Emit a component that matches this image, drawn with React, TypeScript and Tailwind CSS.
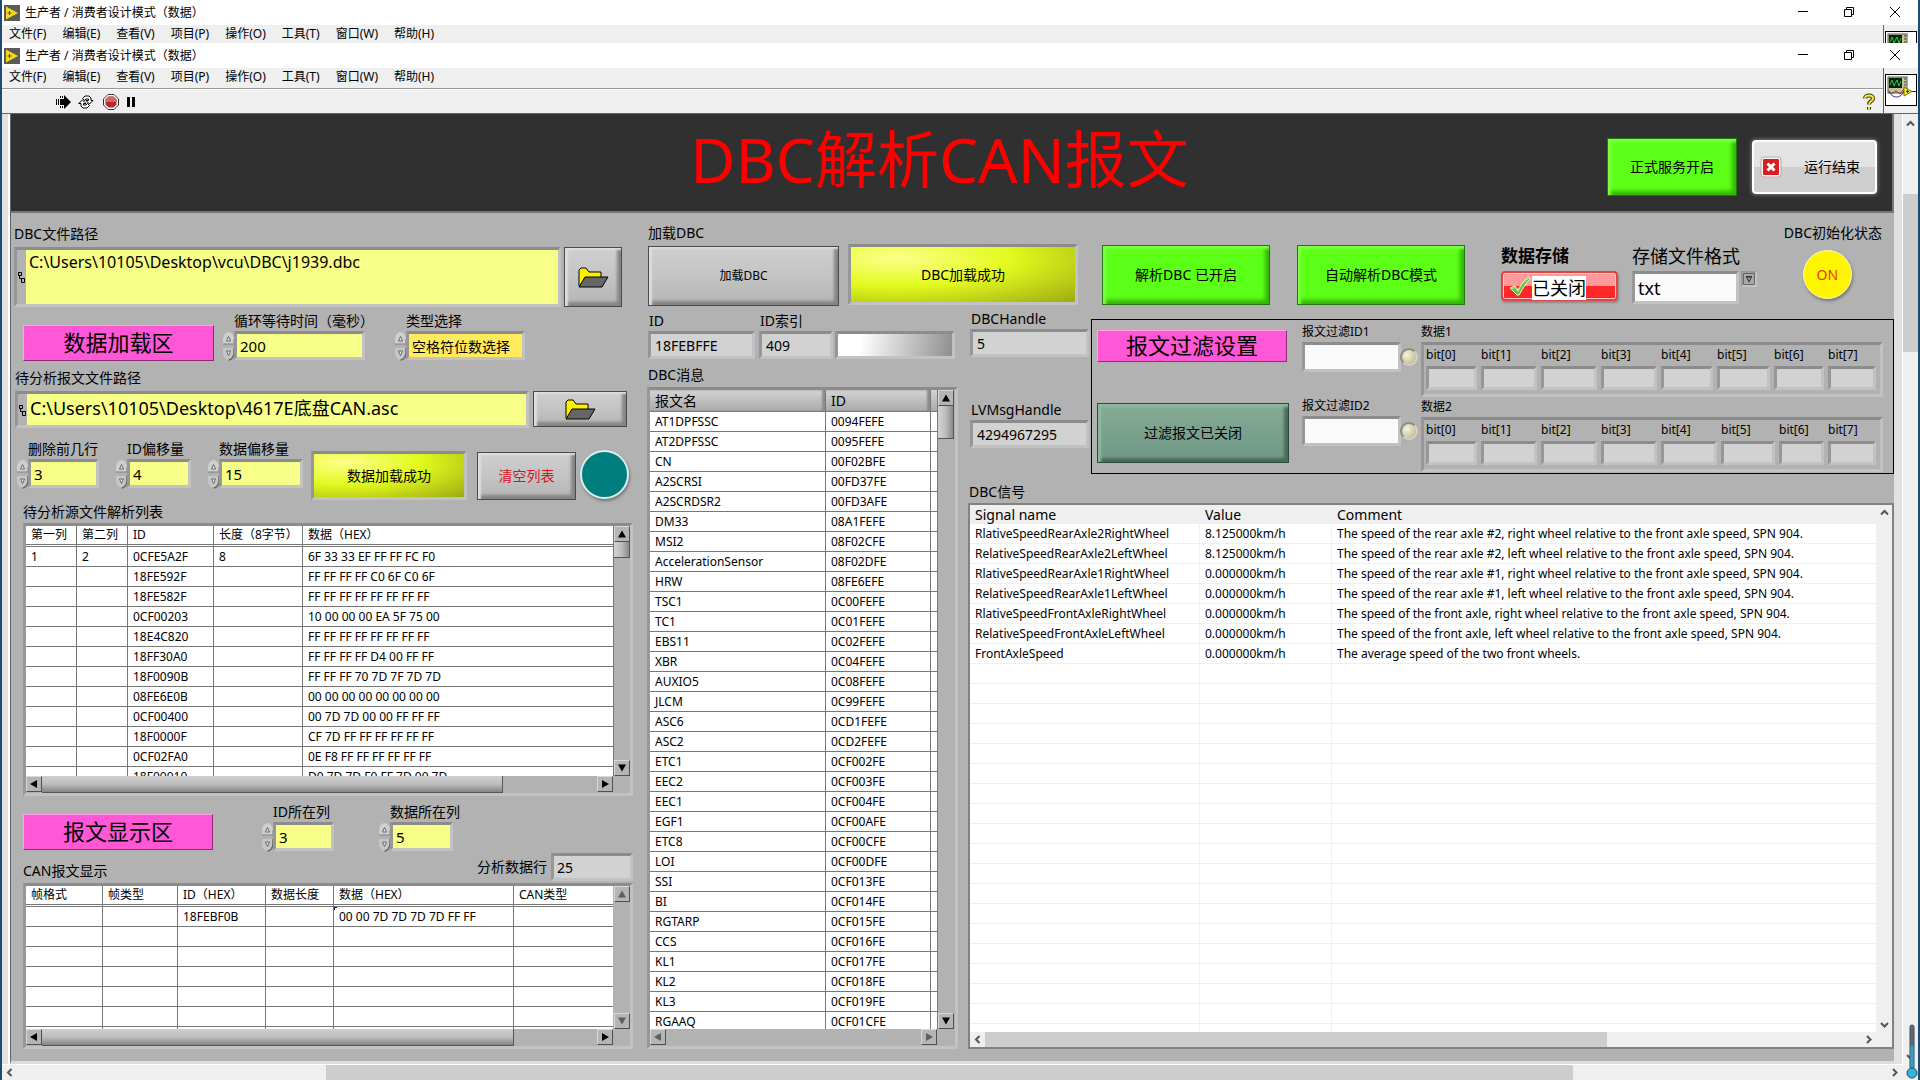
import type { ReactNode } from "react";

const menus = ["文件(F)", "编辑(E)", "查看(V)", "项目(P)", "操作(O)", "工具(T)", "窗口(W)", "帮助(H)"];

const sourceRows = [
  ["1", "2", "0CFE5A2F", "8", "6F 33 33 EF FF FF FC F0"],
  ["", "", "18FE592F", "", "FF FF FF FF C0 6F C0 6F"],
  ["", "", "18FE582F", "", "FF FF FF FF FF FF FF FF"],
  ["", "", "0CF00203", "", "10 00 00 00 EA 5F 75 00"],
  ["", "", "18E4C820", "", "FF FF FF FF FF FF FF FF"],
  ["", "", "18FF30A0", "", "FF FF FF FF D4 00 FF FF"],
  ["", "", "18F0090B", "", "FF FF FF 70 7D 7F 7D 7D"],
  ["", "", "08FE6E0B", "", "00 00 00 00 00 00 00 00"],
  ["", "", "0CF00400", "", "00 7D 7D 00 00 FF FF FF"],
  ["", "", "18F0000F", "", "CF 7D FF FF FF FF FF FF"],
  ["", "", "0CF02FA0", "", "0E F8 FF FF FF FF FF FF"],
  ["", "", "18F00010", "", "D0 7D 7D F0 FF 7D 00 7D"],
];

const canRows = [
  ["", "", "18FEBF0B", "", "00 00 7D 7D 7D 7D FF FF", ""],
  ["", "", "", "", "", ""],
  ["", "", "", "", "", ""],
  ["", "", "", "", "", ""],
  ["", "", "", "", "", ""],
  ["", "", "", "", "", ""],
  ["", "", "", "", "", ""],
];

const messages = [
  ["AT1DPFSSC", "0094FEFE"],
  ["AT2DPFSSC", "0095FEFE"],
  ["CN", "00F02BFE"],
  ["A2SCRSI", "00FD37FE"],
  ["A2SCRDSR2", "00FD3AFE"],
  ["DM33", "08A1FEFE"],
  ["MSI2", "08F02CFE"],
  ["AccelerationSensor", "08F02DFE"],
  ["HRW", "08FE6EFE"],
  ["TSC1", "0C00FEFE"],
  ["TC1", "0C01FEFE"],
  ["EBS11", "0C02FEFE"],
  ["XBR", "0C04FEFE"],
  ["AUXIO5", "0C08FEFE"],
  ["JLCM", "0C99FEFE"],
  ["ASC6", "0CD1FEFE"],
  ["ASC2", "0CD2FEFE"],
  ["ETC1", "0CF002FE"],
  ["EEC2", "0CF003FE"],
  ["EEC1", "0CF004FE"],
  ["EGF1", "0CF00AFE"],
  ["ETC8", "0CF00CFE"],
  ["LOI", "0CF00DFE"],
  ["SSI", "0CF013FE"],
  ["BI", "0CF014FE"],
  ["RGTARP", "0CF015FE"],
  ["CCS", "0CF016FE"],
  ["KL1", "0CF017FE"],
  ["KL2", "0CF018FE"],
  ["KL3", "0CF019FE"],
  ["RGAAQ", "0CF01CFE"],
];

const signals = [
  ["RlativeSpeedRearAxle2RightWheel", "8.125000km/h", "The speed of the rear axle #2, right wheel relative to the front axle speed, SPN 904."],
  ["RelativeSpeedRearAxle2LeftWheel", "8.125000km/h", "The speed of the rear axle #2, left wheel relative to the front axle speed, SPN 904."],
  ["RlativeSpeedRearAxle1RightWheel", "0.000000km/h", "The speed of the rear axle #1, right wheel relative to the front axle speed, SPN 904."],
  ["RelativeSpeedRearAxle1LeftWheel", "0.000000km/h", "The speed of the rear axle #1, left wheel relative to the front axle speed, SPN 904."],
  ["RlativeSpeedFrontAxleRightWheel", "0.000000km/h", "The speed of the front axle, right wheel relative to the front axle speed, SPN 904."],
  ["RelativeSpeedFrontAxleLeftWheel", "0.000000km/h", "The speed of the front axle, left wheel relative to the front axle speed, SPN 904."],
  ["FrontAxleSpeed", "0.000000km/h", "The average speed of the two front wheels."],
];

const blankSignals = Array.from({ length: 19 }, (_, i) => i);

const sunken =
  "border-[3px] border-t-[#8c8c8c] border-l-[#979797] border-r-[#c2c2c2] border-b-[#c2c2c2]";
const grayButton =
  "border border-[#4a4a4a] bg-linear-to-b from-[#cfcfcf] via-[#c4c4c4] to-[#b4b4b4] shadow-[inset_3px_2px_2px_#dedede,inset_-4px_-4px_3px_#858585]";
const greenButton =
  "border border-[#1f7a0c] bg-[#5cff16] text-sm shadow-[inset_3px_3px_3px_#7dff45,inset_-4px_-4px_4px_#35b30b]";

function WindowBar() {
  return (
    <div className="flex h-[25px] items-center bg-white pl-[2px]">
      <svg width="16" height="16" viewBox="0 0 16 16">
        <rect width="16" height="16" fill="#5b5b5b" />
        <path d="M2 1.5 14 8 2 14.5z" fill="#f5d91c" />
        <path d="M3.5 8h4M5.5 6v4" stroke="#6b5200" />
      </svg>
      <span className="ml-[5px] flex-1 text-xs">生产者 / 消费者设计模式（数据）</span>
      <div className="flex items-center gap-[34px] pr-[17px] pb-[2px]">
        <button aria-label="最小化">
          <svg width="12" height="12" className="block" stroke="#000" fill="none">
            <path d="M1 5.5h10" />
          </svg>
        </button>
        <button aria-label="还原">
          <svg width="12" height="12" className="block" stroke="#000" fill="none">
            <path d="M1.500 3.500h7v7h-7zM3.500 3.500v-2h7v7h-2" />
          </svg>
        </button>
        <button aria-label="关闭">
          <svg width="12" height="12" className="block" stroke="#000" fill="none">
            <path d="M1 1l10 10M11 1 1 11" />
          </svg>
        </button>
      </div>
    </div>
  );
}

function MenuBar() {
  return (
    <nav className="flex h-[18px] items-center gap-4 bg-[#efefef] pl-[7px] text-xs leading-4">
      {menus.map((m) => (
        <button key={m}>{m}</button>
      ))}
    </nav>
  );
}

function ViIcon() {
  return (
    <svg width="32" height="32" viewBox="0 0 32 32" className="block shrink-0">
      <rect x=".5" y=".5" width="31" height="31" fill="#fff" stroke="#000" />
      <rect x="3" y="3" width="19" height="16" fill="#c9c39a" stroke="#555" />
      <rect x="4" y="4" width="13" height="10" fill="#03250c" />
      <path d="M5 11l2-5 2 6 3-6 2 6 2-5" stroke="#31c44a" fill="none" />
      <path d="M19 5h2M19 8h2M19 11h2" stroke="#333" />
      <path d="M4 17c3 8 12 8 15 0" stroke="#1c1c8c" fill="none" />
      <path d="M6 20l5-3 4 3 4-5" stroke="#d02020" fill="none" />
      <path d="M19 13l8 4.500-8 4.500z" fill="#f7e83c" stroke="#7d6f00" />
      <path d="M27 17.500h4M21 17.500h3M22.500 16v3" stroke="#333" />
    </svg>
  );
}

function Toolbar() {
  return (
    <div className="flex h-[23px] items-center bg-[#efefef] pl-[54px] pr-[7px]">
      <button aria-label="运行">
        <svg width="16" height="14" className="block">
          <path d="M8 4V0l7 7-7 7v-4H5V4z" />
          <path d="M.500 4v6M2.500 4v6M4.500 4v6M4.500 1v2M6.500 1v2M4.500 11v2M6.500 11v2" stroke="#000" />
        </svg>
      </button>
      <button aria-label="连续运行" className="ml-[6px]">
        <svg width="16" height="14" className="block" fill="#fff" stroke="#000">
          <path d="M4.500 3.500l2.500-2.500h4l2 2V5.500h2L11.500 9 8 5.500h2.500V4H8L6.500 5.500z" />
          <path d="M11.500 10.500L9 13H5l-2-2V8.500H.500L4.500 5 8 8.500H5.500V10H8l1.500-1.500z" />
        </svg>
      </button>
      <button aria-label="中止执行" className="ml-[9px]">
        <svg width="16" height="16" className="block">
          <path d="M5 .500h6L15.500 5v6L11 15.500H5L.500 11V5z" fill="#fff" stroke="#333" />
          <path d="M5.500 2.500h5l3 3v5l-3 3h-5l-3-3v-5z" fill="#b32a2e" />
          <path d="M5.500 2.500h5l3 3V8h-11V5.500z" fill="#cf6a6c" />
        </svg>
      </button>
      <button aria-label="暂停" className="ml-[7px]">
        <svg width="12" height="14" className="block">
          <path d="M1 2h3v10H1zM6 2h3v10H6z" />
        </svg>
      </button>
      <button aria-label="帮助" className="ml-auto">
        <svg width="14" height="18" viewBox="0 0 14 18" className="block" fill="none">
          <path d="M3 5.500C3 1.500 11 1.500 11 5.500 11 8 7 8 7 11.500M7 14v2.500" stroke="#3d3a00" strokeWidth="4" />
          <path d="M3 5.500C3 1.500 11 1.500 11 5.500 11 8 7 8 7 11.500M7 14v2.500" stroke="#f2e83a" strokeWidth="2" />
        </svg>
      </button>
    </div>
  );
}

function Chevron({ d }: { d: string }) {
  return (
    <svg width="15" height="15" viewBox="0 0 15 15" className="block shrink-0">
      <path d={d} stroke="#555" strokeWidth="2" fill="none" />
    </svg>
  );
}

const up = "M4 9.500 7.500 6 11 9.500";
const down = "M4 6 7.500 9.500 11 6";
const left = "M9.500 4 6 7.500 9.500 11";
const right = "M6 4 9.500 7.500 6 11";

function ArrowButton({ dir, dim }: { dir: "up" | "down" | "left" | "right"; dim?: boolean }) {
  const shapes = {
    up: "M7 3.500 11 10.500H3z",
    down: "M7 10.500 3 3.500h8z",
    left: "M3 7l7-4v8z",
    right: "M11 7 4 3v8z",
  };
  return (
    <button
      aria-label={dir}
      className="h-4 w-4 shrink-0 border border-t-[#d8d8d8] border-l-[#d8d8d8] border-r-[#4f4f4f] border-b-[#4f4f4f] bg-[#b5b5b5]"
    >
      <svg width="14" height="14" className="block">
        <path d={shapes[dir]} fill={dim ? "#5f5f5f" : "#000"} />
      </svg>
    </button>
  );
}

function Folder() {
  return (
    <svg width="31" height="21" viewBox="0 0 31 21" stroke="#000" strokeLinejoin="round">
      <path d="M1 19V3l2-2h5l3 4h12v5" fill="#fff200" />
      <path d="M1 20 7 10h23l-6 10z" fill="#666" />
    </svg>
  );
}

function Pink({ children, className }: { children: ReactNode; className: string }) {
  return (
    <h2
      className={`flex items-center justify-center border border-t-[#ffa3e6] border-l-[#ffa3e6] border-r-[#8c2c77] border-b-[#8c2c77] bg-[#ff57d5] pb-[2px] text-[22px] leading-7 ${className}`}
    >
      {children}
    </h2>
  );
}

function Spinner() {
  return (
    <svg width="13" height="30" viewBox="0 0 13 30" className="block shrink-0">
      <path d="M1 13V8C1 4 4 1 6.500 1S12 4 12 8v5z" fill="#cfcfcf" />
      <path d="M12 8v5H1" fill="none" stroke="#808080" />
      <path d="M1 17v5c0 4 3 7 5.500 7S12 26 12 22v-5z" fill="#c6c6c6" />
      <path d="M12 17v5c0 4-3 7-5.500 7" fill="none" stroke="#6a6a6a" strokeWidth="1.500" />
      <path d="M4.500 10 6.500 5.500 8.500 10zM4.500 20l2 4.500 2-4.500z" fill="#eee" stroke="#666" />
    </svg>
  );
}

function Spin(props: { id: string; label: string; value: string; width: string; bg?: string; size?: string }) {
  return (
    <div className="grid shrink-0 grid-cols-[12px_auto]">
      <label htmlFor={props.id} className="col-start-2 w-0 text-sm leading-5 whitespace-nowrap">
        {props.label}
      </label>
      <Spinner />
      <input
        id={props.id}
        defaultValue={props.value}
        className={`${sunken} h-[29px] px-[3px] ${props.width} ${props.bg ?? "bg-[#f7ff88]"} ${props.size ?? "text-[15px]"}`}
      />
    </div>
  );
}

function PathMark() {
  return (
    <svg width="9" height="14" className="block shrink-0 self-center" fill="none" stroke="#000">
      <path d="M1.500 2.500h3v3h-3zM2.500 5.500v3h2M4.500 8.500h3v4h-3z" />
    </svg>
  );
}

function Readout(props: { id: string; label: string; value: string; className: string }) {
  return (
    <div className={`flex flex-col ${props.className}`}>
      <label htmlFor={props.id} className="pl-px text-sm leading-5 whitespace-nowrap">
        {props.label}
      </label>
      <input
        id={props.id}
        readOnly
        defaultValue={props.value}
        className={`${sunken} h-7 w-full bg-[#d2d2d2] px-1 text-sm`}
      />
    </div>
  );
}

function HScroll({ thumb, dim }: { thumb?: string; dim?: boolean }) {
  return (
    <div className="flex h-[17px] shrink-0 bg-[#b2b2b2]">
      <ArrowButton dir="left" dim={dim} />
      <div className="flex-1">
        {thumb && (
          <div
            className={`h-full border-r border-b border-[#555] bg-linear-to-b from-[#cfcfcf] via-[#bdbdbd] to-[#858585] ${thumb}`}
          />
        )}
      </div>
      <ArrowButton dir="right" dim={dim} />
    </div>
  );
}

function VScroll({ thumb, dim }: { thumb?: string; dim?: boolean }) {
  return (
    <div className="flex w-4 shrink-0 flex-col bg-[#b2b2b2]">
      <ArrowButton dir="up" dim={dim} />
      <div className="min-h-0 flex-1">
        {thumb && (
          <div
            className={`w-full border-r border-b border-[#555] bg-linear-to-r from-[#d2d2d2] via-[#bdbdbd] to-[#8a8a8a] ${thumb}`}
          />
        )}
      </div>
      <ArrowButton dir="down" dim={dim} />
    </div>
  );
}

function GridTable(props: { heads: string[]; cols: string[]; rows: string[][]; active?: number }) {
  return (
    <table className="w-full table-fixed border-separate border-spacing-0 text-xs leading-4">
      <colgroup>
        {props.cols.map((c, i) => (
          <col key={i} className={c} />
        ))}
      </colgroup>
      <thead>
        <tr className="h-[21px] text-left">
          {props.heads.map((h) => (
            <th
              key={h}
              className="border-b-[3px] border-double border-[#777] border-r pl-[5px] font-normal whitespace-nowrap last:border-r-0"
            >
              {h}
            </th>
          ))}
        </tr>
      </thead>
      <tbody>
        {props.rows.map((row, i) => (
          <tr key={i} className="h-5">
            {row.map((cell, j) => (
              <td
                key={j}
                className="relative border-r border-b border-[#777] pl-[5px] whitespace-nowrap last:border-r-0"
              >
                {i === 0 && j === props.active && (
                  <span className="absolute top-0 left-0 h-[3px] w-[3px] border-t border-l border-[#14147a]" />
                )}
                {cell}
              </td>
            ))}
          </tr>
        ))}
      </tbody>
    </table>
  );
}

function FilterId({ id, label }: { id: string; label: string }) {
  return (
    <div>
      <label htmlFor={id} className="block text-xs leading-5 whitespace-nowrap">
        {label}
      </label>
      <div className="flex items-center">
        <input id={id} className={`${sunken} h-[30px] w-[99px] bg-[#fafafa] px-1 text-sm`} />
        <span className="-ml-px h-[18px] w-[18px] rounded-full border-2 border-t-[#8c8c7c] border-l-[#8c8c7c] border-r-[#d0d0c4] border-b-[#d0d0c4] bg-radial-[at_35%_35%] from-[#f6f3d8] to-[#b5ae86]" />
      </div>
    </div>
  );
}

function BitCluster({ name, title, cols }: { name: string; title: string; cols: string }) {
  return (
    <fieldset className="min-w-0 flex-1">
      <legend className="text-xs leading-5">{title}</legend>
      <div className={`${sunken} grid h-[55px] pl-[2px] ${cols}`}>
        {[0, 1, 2, 3, 4, 5, 6, 7].map((n) => (
          <div key={n} className="pr-1">
            <label htmlFor={`${name}-${n}`} className="block text-xs leading-5">
              bit[{n}]
            </label>
            <input
              id={`${name}-${n}`}
              readOnly
              className={`${sunken} mt-px block h-6 w-full bg-[#d2d2d2]`}
            />
          </div>
        ))}
      </div>
    </fieldset>
  );
}

function LeftColumn() {
  return (
    <div className="flex w-[622px] shrink-0 flex-col pt-[11px]">
      <label htmlFor="dbc-path" className="pl-[3px] text-sm leading-5">
        DBC文件路径
      </label>
      <div className="mt-[3px] ml-[3px] flex h-[60px] gap-[3px]">
        <div className={`${sunken} flex w-[547px] bg-[#b2b2b2]`}>
          <PathMark />
          <textarea
            id="dbc-path"
            defaultValue={"C:\\Users\\10105\\Desktop\\vcu\\DBC\\j1939.dbc"}
            className="block min-w-0 flex-1 resize-none bg-[#f7ff88] px-[3px] text-base leading-6"
          />
        </div>
        <button aria-label="浏览DBC文件" className={`${grayButton} flex w-[58px] items-center justify-center`}>
          <Folder />
        </button>
      </div>

      <div className="mt-1 ml-3 flex h-[50px]">
        <Pink className="mt-[14px] h-9 w-[191px]">数据加载区</Pink>
        <div className="ml-2">
          <Spin id="wait" label="循环等待时间（毫秒）" value="200" width="w-[131px]" />
        </div>
        <div className="ml-[29px]">
          <Spin
            id="kind"
            label="类型选择"
            value="空格符位数选择"
            width="w-[119px]"
            bg="bg-[#ffeb5c]"
            size="text-sm"
          />
        </div>
      </div>

      <label htmlFor="asc-path" className="mt-[7px] pl-1 text-sm leading-5">
        待分析报文文件路径
      </label>
      <div className="mt-[3px] ml-1 flex gap-1">
        <div className={`${sunken} flex h-[37px] w-[514px] bg-[#b2b2b2]`}>
          <PathMark />
          <input
            id="asc-path"
            defaultValue={"C:\\Users\\10105\\Desktop\\4617E底盘CAN.asc"}
            className="min-w-0 flex-1 bg-[#f7ff88] px-[3px] pb-1 text-lg leading-6"
          />
        </div>
        <button aria-label="浏览报文文件" className={`${grayButton} flex h-9 w-[94px] items-center justify-center`}>
          <Folder />
        </button>
      </div>

      <div className="mt-[11px] ml-[5px] flex h-[61px] items-start">
        <Spin id="skip" label="删除前几行" value="3" width="w-[71px]" />
        <div className="ml-4">
          <Spin id="id-shift" label="ID偏移量" value="4" width="w-[64px]" />
        </div>
        <div className="ml-4">
          <Spin id="data-shift" label="数据偏移量" value="15" width="w-[84px]" />
        </div>
        <button
          className={`${sunken} mt-3 ml-2 h-[49px] w-[156px] bg-radial-[at_20%_20%] from-[#fdff8a] via-[#e2fa1e] via-45% to-[#9dab10] text-sm`}
        >
          数据加载成功
        </button>
        <button className={`${grayButton} mt-[13px] ml-[10px] h-12 w-[99px] text-sm text-[#d8141c]`}>清空列表</button>
        <span className="mt-[11px] ml-1 h-[49px] w-[49px] rounded-full border-2 border-[#d8efee] bg-[#007d7d] shadow-[1px_2px_3px_#777]" />
      </div>

      <span className="mt-[2px] pl-3 text-sm leading-5">待分析源文件解析列表</span>
      <div className={`${sunken} mt-px ml-3 flex min-h-0 flex-1`}>
        <div className="flex min-w-0 flex-1 flex-col">
          <div className="min-h-0 flex-1 overflow-hidden bg-white">
            <GridTable
              heads={["第一列", "第二列", "ID", "长度（8字节）", "数据（HEX）"]}
              cols={["w-[51px]", "w-[51px]", "w-[86px]", "w-[89px]", ""]}
              rows={sourceRows}
            />
          </div>
          <HScroll thumb="w-[83%]" />
        </div>
        <div className="mb-[17px] flex border-l border-[#777]">
          <VScroll thumb="h-4" />
        </div>
      </div>

      <div className="mt-[6px] ml-3 flex h-[51px]">
        <Pink className="mt-3 h-9 w-[190px]">报文显示区</Pink>
        <div className="ml-12">
          <Spin id="id-col" label="ID所在列" value="3" width="w-[61px]" />
        </div>
        <div className="ml-[44px]">
          <Spin id="data-col" label="数据所在列" value="5" width="w-[63px]" />
        </div>
      </div>

      <div className="ml-3 flex h-[27px]">
        <span className="mt-2 text-sm leading-5">CAN报文显示</span>
        <label htmlFor="row-no" className="mt-1 ml-auto text-sm leading-5">
          分析数据行
        </label>
        <input
          id="row-no"
          readOnly
          defaultValue="25"
          className={`${sunken} ml-1 h-7 w-[82px] bg-[#d2d2d2] px-[3px] text-sm`}
        />
      </div>
      <div className={`${sunken} mt-[3px] ml-3 flex h-[166px]`}>
        <div className="flex min-w-0 flex-1 flex-col">
          <div className="min-h-0 flex-1 overflow-hidden bg-white">
            <GridTable
              heads={["帧格式", "帧类型", "ID（HEX）", "数据长度", "数据（HEX）", "CAN类型"]}
              cols={["w-[77px]", "w-[75px]", "w-[88px]", "w-[68px]", "w-[180px]", ""]}
              rows={canRows}
              active={4}
            />
          </div>
          <HScroll thumb="w-[85%]" />
        </div>
        <div className="mb-[17px] flex border-l border-[#b2b2b2]">
          <VScroll dim />
        </div>
      </div>
    </div>
  );
}

function TopControls() {
  return (
    <div className="flex h-24 items-start pt-[10px]">
      <div className="w-[191px] shrink-0">
        <p className="text-sm leading-5">加载DBC</p>
        <button className={`${grayButton} mt-[3px] h-[60px] w-full text-xs`}>加载DBC</button>
      </div>
      <button
        className={`${sunken} mt-[21px] ml-[9px] h-[61px] w-[230px] shrink-0 bg-radial-[at_20%_20%] from-[#fdff8a] via-[#e2fa1e] via-45% to-[#9dab10] text-sm`}
      >
        DBC加载成功
      </button>
      <button className={`${greenButton} mt-[22px] ml-6 h-[60px] w-[168px] shrink-0`}>解析DBC 已开启</button>
      <button className={`${greenButton} mt-[22px] ml-[27px] h-[60px] w-[168px] shrink-0`}>自动解析DBC模式</button>
      <div className="mt-[21px] ml-9 w-[117px] shrink-0">
        <p className="text-[17px] leading-6 font-bold">数据存储</p>
        <button className="mt-[3px] flex h-[30px] w-full items-center rounded border-2 border-[#e04646] bg-linear-to-b from-[#ff9a9a] from-50% to-[#ff2626] to-50% pl-[5px] shadow-[inset_0_0_0_1px_#ffc4c4,1px_2px_2px_#8a8a8a]">
          <svg width="24" height="22" viewBox="0 0 24 22" className="shrink-0">
            <path d="M2 13l5-2 3 4C13 9 17 4 21 2l1 2C18 8 15 13 11 20H9z" fill="#6cc435" stroke="#e9f7dd" />
            <path d="M4 13.500l3-1 3 4C13 10 16 6 20 4" fill="none" stroke="#b9ec8f" />
          </svg>
          <span className="mt-1 bg-white text-lg leading-6">已关闭</span>
        </button>
      </div>
      <div className="mt-[21px] ml-[14px] w-[126px] shrink-0">
        <label htmlFor="format" className="block text-lg leading-6">
          存储文件格式
        </label>
        <div className="mt-[3px] flex items-start gap-[2px]">
          <input
            id="format"
            defaultValue="txt"
            className={`${sunken} h-[33px] w-[107px] bg-[#fafafa] px-[3px] text-lg leading-6`}
          />
          <button
            aria-label="选择格式"
            className="h-4 w-4 border-2 border-t-[#999] border-l-[#999] border-r-[#c4c4c4] border-b-[#c4c4c4] bg-[#a8a8a8]"
          >
            <svg width="12" height="12" className="block">
              <path d="M.500.500h11v11H.500z" stroke="#666" fill="none" />
              <path d="M3 3.500h6M6 9 3.500 4h5z" stroke="#333" fill="#999" />
            </svg>
          </button>
        </div>
      </div>
      <div className="mr-3 ml-auto flex flex-col items-center">
        <p className="text-sm leading-5 whitespace-nowrap">DBC初始化状态</p>
        <span className="mt-[7px] mr-[11px] flex h-[49px] w-[49px] items-center justify-center rounded-full border border-[#fdfbc0] bg-[#fff500] text-sm text-[#e8381c] shadow-[1px_2px_3px_#777]">
          ON
        </span>
      </div>
    </div>
  );
}

function MessageColumn() {
  return (
    <div className="flex w-[311px] shrink-0 flex-col pt-[2px]">
      <div className="flex pl-px">
        <Readout id="msg-id" label="ID" value="18FEBFFE" className="w-[107px]" />
        <Readout id="msg-index" label="ID索引" value="409" className="ml-[4px] w-[74px]" />
        <span className={`${sunken} mt-5 ml-[2px] h-7 w-[120px]`}>
          <span className="block h-full bg-linear-[100deg] from-white from-20% to-[#8f8f8f]" />
        </span>
      </div>
      <p className="mt-[6px] pl-px text-sm leading-5">DBC消息</p>
      <div className={`${sunken} mt-[2px] flex min-h-0 flex-1`}>
        <div className="flex min-w-0 flex-1 flex-col">
          <div className="min-h-0 flex-1 overflow-hidden bg-white">
            <table className="w-full table-fixed border-separate border-spacing-0 text-xs leading-4">
              <colgroup>
                <col className="w-[176px]" />
                <col className="w-[105px]" />
                <col />
              </colgroup>
              <thead>
                <tr className="h-[22px] bg-linear-to-b from-[#d4d4d4] to-[#a8a8a8] text-left text-sm leading-5">
                  <th className="border-r border-b border-[#777] pl-[5px] font-normal shadow-[inset_-3px_0_2px_#8d8d8d]">报文名</th>
                  <th className="border-r border-b border-[#777] pl-[5px] font-normal shadow-[inset_-3px_0_2px_#8d8d8d]">ID</th>
                  <th className="border-b border-[#777]" />
                </tr>
              </thead>
              <tbody>
                {messages.map(([name, id]) => (
                  <tr key={name} className="h-5">
                    <td className="border-r border-b border-[#777] pl-[5px]">{name}</td>
                    <td className="border-r border-b border-[#777] pl-[5px]">{id}</td>
                    <td className="border-b border-[#777]" />
                  </tr>
                ))}
              </tbody>
            </table>
          </div>
          <HScroll dim />
        </div>
        <div className="mr-px mb-[17px] flex border-l border-[#777]">
          <VScroll thumb="h-[33px]" />
        </div>
      </div>
    </div>
  );
}

function FilterPanel() {
  return (
    <section className="flex min-w-0 flex-1 border border-black py-[2px] pr-[10px] pl-[5px]">
      <div className="w-[192px] shrink-0">
        <Pink className="mt-2 h-8 w-[190px]">报文过滤设置</Pink>
        <button className="mt-[41px] h-[60px] w-full border border-[#2e4a40] bg-linear-to-b from-[#86ab97] to-[#6f9784] text-sm shadow-[inset_3px_3px_3px_#8fb8a3,inset_-4px_-4px_3px_#4a6b5b]">
          过滤报文已关闭
        </button>
      </div>
      <div className="ml-[13px] flex w-[119px] shrink-0 flex-col gap-6">
        <FilterId id="filter-1" label="报文过滤ID1" />
        <FilterId id="filter-2" label="报文过滤ID2" />
      </div>
      <div className="flex min-w-0 flex-1 flex-col">
        <BitCluster
          name="a"
          title="数据1"
          cols="grid-cols-[55fr_60fr_60fr_60fr_56fr_57fr_54fr_52fr]"
        />
        <BitCluster
          name="b"
          title="数据2"
          cols="grid-cols-[55fr_60fr_60fr_60fr_60fr_58fr_49fr_52fr]"
        />
      </div>
    </section>
  );
}

function SignalList() {
  return (
    <div className="flex min-h-0 flex-1 flex-col border-2 border-[#828282] bg-white">
      <div className="flex min-h-0 flex-1">
        <div className="min-w-0 flex-1 overflow-hidden">
          <table className="w-full table-fixed border-separate border-spacing-0 text-xs leading-4">
            <colgroup>
              <col className="w-[230px]" />
              <col className="w-[132px]" />
              <col />
            </colgroup>
            <thead>
              <tr className="h-[19px] bg-[#efefef] text-left text-sm leading-[19px]">
                <th className="pl-[5px] font-normal">Signal name</th>
                <th className="pl-[5px] font-normal">Value</th>
                <th className="pl-[5px] font-normal">Comment</th>
              </tr>
            </thead>
            <tbody>
              {signals.map(([name, value, comment]) => (
                <tr key={name} className="h-5">
                  <td className="border-r border-b border-[#efefef] pl-[5px]">{name}</td>
                  <td className="border-r border-b border-[#efefef] pl-[5px]">{value}</td>
                  <td className="border-b border-[#efefef] pl-[5px] whitespace-nowrap">{comment}</td>
                </tr>
              ))}
              {blankSignals.map((n) => (
                <tr key={n} className="h-5">
                  <td className="border-r border-b border-[#efefef]" />
                  <td className="border-r border-b border-[#efefef]" />
                  <td className="border-b border-[#efefef]" />
                </tr>
              ))}
            </tbody>
          </table>
        </div>
        <div className="flex w-4 flex-col items-center justify-between bg-[#efefef]">
          <Chevron d={up} />
          <Chevron d={down} />
        </div>
      </div>
      <div className="flex h-[15px] bg-[#efefef]">
        <Chevron d={left} />
        <div className="flex-1">
          <div className="h-full w-[71%] bg-[#cdcdcd]" />
        </div>
        <Chevron d={right} />
        <div className="w-4" />
      </div>
    </div>
  );
}

export default function App() {
  return (
    <div className="flex h-screen w-full flex-col overflow-hidden border-x-2 border-[#1f4b73] bg-white font-[family-name:'Noto_Sans','Noto_Sans_CJK_SC',sans-serif] text-black">
      <WindowBar />
      <div className="flex h-[18px] shrink-0 overflow-hidden bg-[#efefef]">
        <div className="flex-1">
          <MenuBar />
        </div>
        <div className="border-l border-[#666] px-px pt-[6px]">
          <ViIcon />
        </div>
      </div>
      <WindowBar />
      <div className="flex shrink-0 border-b border-[#666] bg-[#efefef]">
        <div className="flex-1">
          <MenuBar />
          <div className="mt-[2px] border-t border-b border-t-[#999] border-b-white" />
          <Toolbar />
        </div>
        <div className="border-l border-[#666] px-px pt-[6px]">
          <ViIcon />
        </div>
      </div>

      <div className="flex min-h-0 flex-1">
        <div className="w-2 border-r-2 border-white bg-[#e1e1e1]" />
        <main className="flex min-w-0 flex-1 flex-col border-b-[3px] border-l border-b-[#dcdcdc] border-l-[#666] bg-[#b2b2b2]">
          <header className="grid h-[99px] shrink-0 grid-cols-[1fr_auto_1fr] items-center border-r-2 border-b-2 border-[#777] bg-[#303030]">
            <h1 className="col-start-2 pr-6 pb-2 text-[62px] leading-[80px] text-[#ff0000]">DBC解析CAN报文</h1>
            <div className="flex items-center justify-end gap-[15px] pt-2 pr-[15px]">
              <button className={`${greenButton} h-[58px] w-[130px]`}>正式服务开启</button>
              <button className="flex h-[54px] w-[125px] items-center rounded border-2 border-white bg-linear-to-b from-[#e3e3e3] from-50% to-[#cecece] to-50% pl-[6px] text-sm shadow-[0_0_4px_#999]">
                <svg width="22" height="22" viewBox="0 0 22 22">
                  <rect x="1" y="1" width="20" height="20" rx="3" fill="#f4f4f4" stroke="#c9a5a5" />
                  <rect x="3" y="3" width="16" height="16" rx="1" fill="#d81e22" />
                  <path d="M7.500 7.500l7 7M14.500 7.500l-7 7" stroke="#fff" strokeWidth="3" />
                </svg>
                <span className="ml-[22px]">运行结束</span>
              </button>
            </div>
          </header>

          <div className="flex min-h-0 flex-1 pb-3">
            <LeftColumn />
            <div className="ml-[14px] flex min-w-0 flex-1 flex-col">
              <div className="pl-px">
                <TopControls />
              </div>
              <div className="flex min-h-0 flex-1">
                <MessageColumn />
                <div className="ml-[10px] flex min-w-0 flex-1 flex-col">
                  <div className="flex pl-[2px]">
                    <div className="mr-[2px] flex w-[119px] shrink-0 flex-col gap-[43px]">
                      <Readout id="dbc-handle" label="DBCHandle" value="5" className="" />
                      <Readout id="lv-handle" label="LVMsgHandle" value="4294967295" className="" />
                    </div>
                    <div className="mt-[10px] flex h-[155px] min-w-0 flex-1">
                      <FilterPanel />
                    </div>
                  </div>
                  <p className="mt-2 mb-px pl-px text-sm leading-5">DBC信号</p>
                  <SignalList />
                </div>
              </div>
            </div>
          </div>
        </main>
        <div className="w-[9px] border-r border-white bg-[#e1e1e1]" />
        <div className="relative flex w-[15px] flex-col items-center bg-[#efefef]">
          <div className="h-20 pt-[2px]">
            <Chevron d={up} />
          </div>
          <div className="h-[158px] w-full bg-[#cdcdcd]" />
          <div className="mt-auto">
            <Chevron d={down} />
          </div>
          <svg width="12" height="56" viewBox="0 0 12 56" className="absolute right-0 -bottom-4 z-10">
            <rect x="4" y="1" width="4" height="44" rx="2" fill="#5d6c77" stroke="#3e4a54" />
            <path d="M6 22v24" stroke="#2ea3cf" strokeWidth="3" />
            <circle cx="6" cy="49" r="5" fill="#35b5e0" stroke="#2b4a5c" />
          </svg>
        </div>
      </div>
      <div className="flex h-4 shrink-0 border-t border-white bg-[#efefef]">
        <Chevron d={left} />
        <div className="flex-1">
          <div className="ml-[309px] h-full w-2/3 bg-[#cdcdcd]" />
        </div>
        <Chevron d={right} />
        <div className="w-4" />
      </div>
    </div>
  );
}
